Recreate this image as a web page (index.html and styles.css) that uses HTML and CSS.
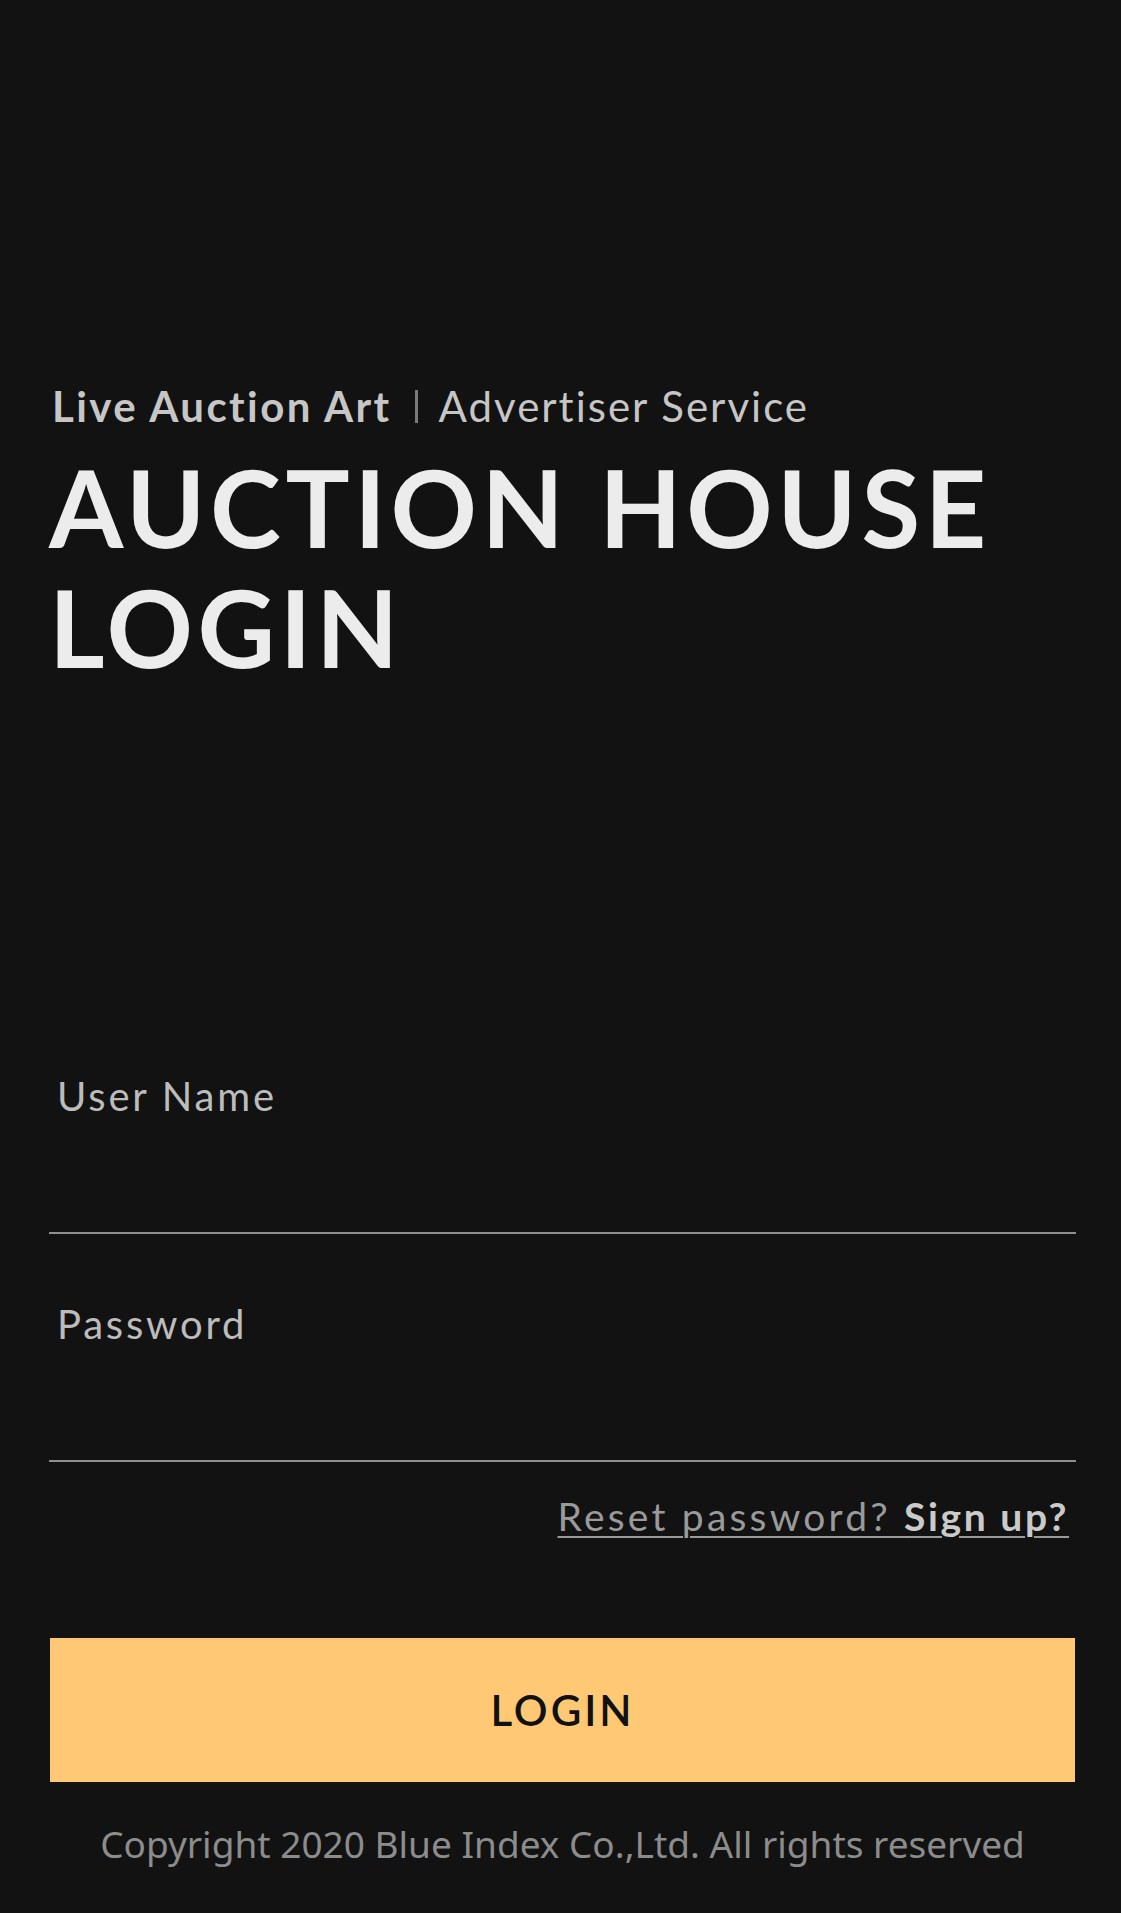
FILE: index.html
```html
<!DOCTYPE html>
<html lang="en">
<head>
<meta charset="utf-8">
<title>Auction House Login</title>
<link rel="stylesheet" href="styles.css">
</head>
<body>
<main class="page">
  <header class="intro">
    <p class="brand"><span class="brand-name">Live Auction Art</span><span class="brand-sep"></span><span class="brand-service">Advertiser Service</span></p>
    <h1 class="title">AUCTION HOUSE<br>LOGIN</h1>
  </header>
  <form class="form">
    <label class="field">
      <span class="field-label">User Name</span>
      <input class="field-input" type="text">
    </label>
    <label class="field">
      <span class="field-label">Password</span>
      <input class="field-input" type="password">
    </label>
    <div class="links">
      <a class="link-reset" href="#">Reset password? <span class="link-signup">Sign up?</span></a>
    </div>
    <button class="login-btn" type="button">LOGIN</button>
  </form>
  <footer class="copyright">Copyright 2020 Blue Index Co.,Ltd. All rights reserved</footer>
</main>
</body>
</html>
```

FILE: styles.css
```css
html, body {
  margin: 0;
  padding: 0;
  background: #121212;
}

.page {
  box-sizing: border-box;
  width: 1121px;
  min-height: 1913px;
  padding: 381px 45px 0 49px;
  display: flex;
  flex-direction: column;
  font-family: "Lato", "Noto Sans", sans-serif;
}

.intro {
  display: flex;
  flex-direction: column;
  gap: 16px;
}

.brand {
  margin: 0;
  display: flex;
  align-items: center;
  font-size: 42px;
  line-height: 50px;
  color: #c6c6c6;
  padding-left: 3px;
}

.brand-name {
  font-weight: 700;
  letter-spacing: 2.4px;
}

.brand-sep {
  width: 3px;
  height: 33px;
  background: #7a7a7a;
  margin: 0 21px 0 23px;
}

.brand-service {
  font-weight: 400;
  letter-spacing: 2px;
}

.title {
  margin: 0;
  font-size: 107px;
  line-height: 120px;
  font-weight: 700;
  color: #ececec;
  letter-spacing: 4.6px;
}

.form {
  margin-top: 385px;
  display: flex;
  flex-direction: column;
}

.field {
  display: flex;
  flex-direction: column;
  height: 162px;
  box-sizing: border-box;
  border-bottom: 2px solid #8e8e8e;
}

.field + .field {
  margin-top: 66px;
}

.field-label {
  font-size: 40px;
  line-height: 48px;
  color: #bcbcbc;
  padding-left: 8px;
  letter-spacing: 2.8px;
}

.field-input {
  flex: 1;
  border: 0;
  background: transparent;
  outline: none;
  color: #e0e0e0;
  font: inherit;
  font-size: 36px;
}

.links {
  display: flex;
  justify-content: flex-end;
  padding-right: 7px;
  margin-top: 30px;
  font-size: 39px;
  line-height: 48px;
}

.link-reset {
  color: #9a9a9a;
  text-decoration: underline;
  text-underline-offset: 5px;
  text-decoration-thickness: 2px;
  letter-spacing: 3.2px;
}

.link-signup {
  color: #cacaca;
  font-weight: 700;
  letter-spacing: 2.6px;
}

.login-btn {
  margin: 98px 1px 0;
  height: 144px;
  border: 0;
  background: #ffc875;
  color: #111111;
  font-family: "Lato", sans-serif;
  font-size: 42px;
  font-weight: 600;
  letter-spacing: 3px;
  cursor: pointer;
}

.copyright {
  margin-top: 38px;
  text-align: center;
  font-family: "Noto Sans", sans-serif;
  font-size: 37px;
  line-height: 48px;
  color: #8c8c8c;
}
```
